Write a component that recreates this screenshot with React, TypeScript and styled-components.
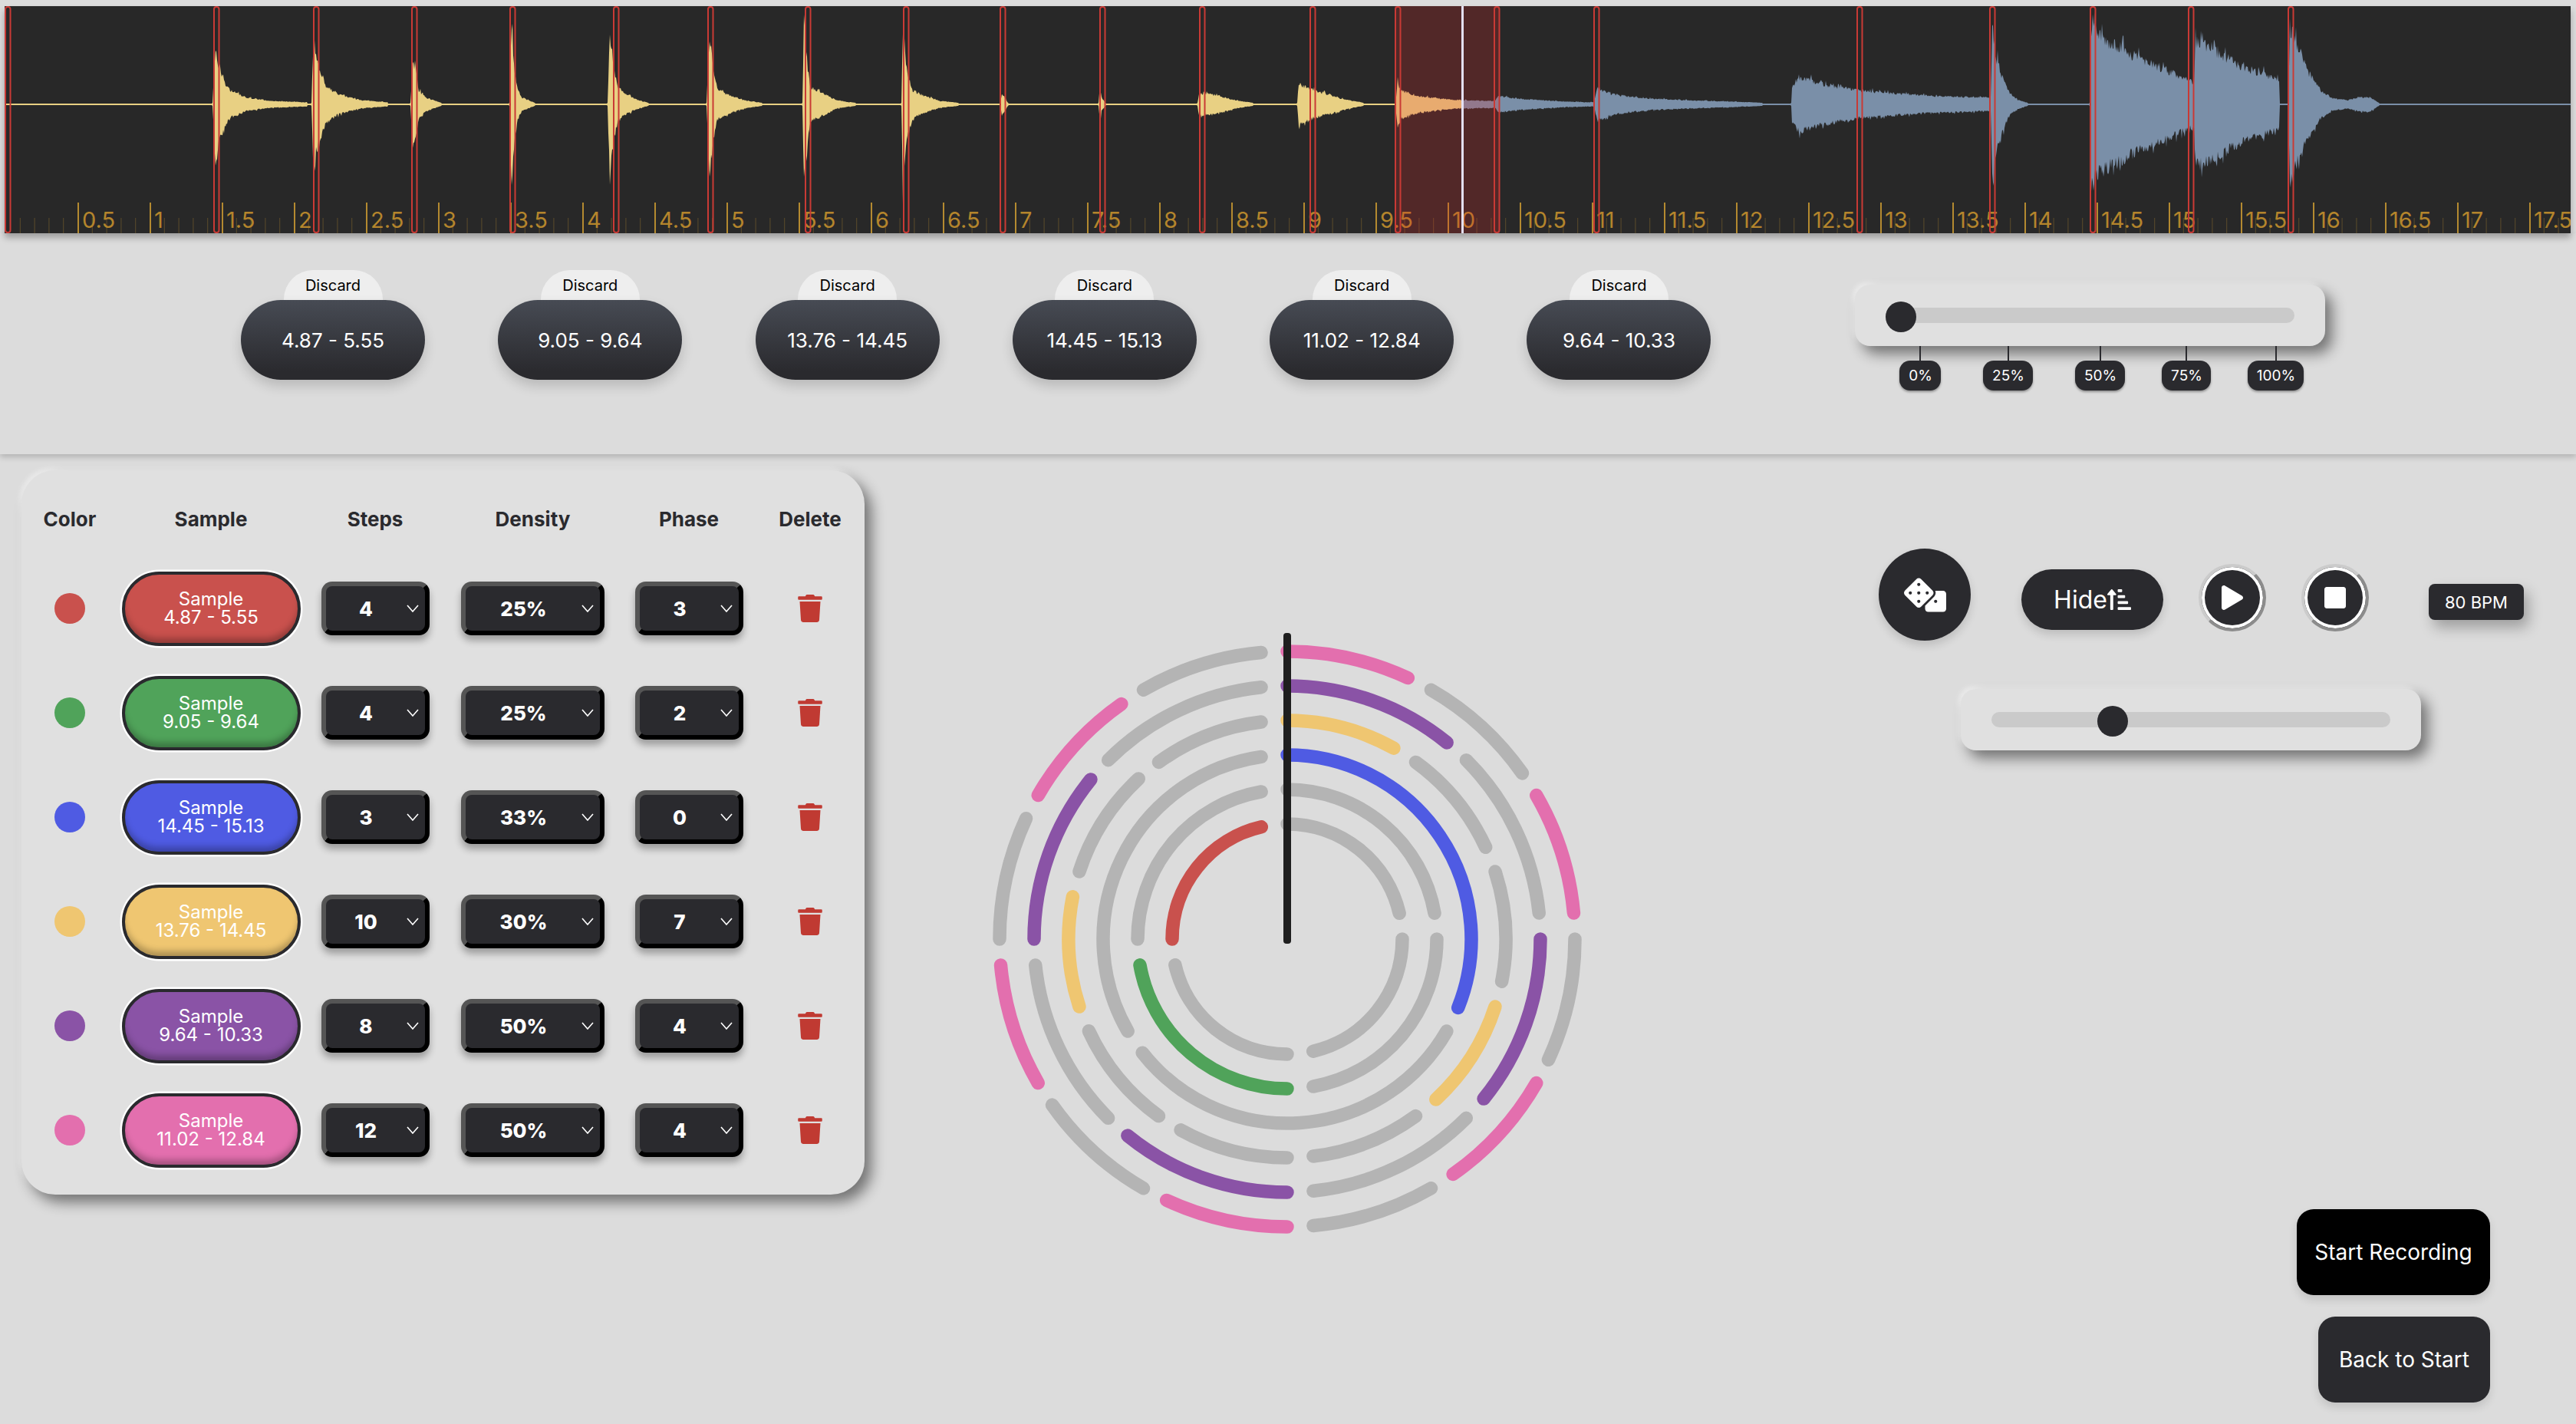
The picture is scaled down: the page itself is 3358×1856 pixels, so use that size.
import React from 'react';
import styled, { createGlobalStyle } from 'styled-components';
import { FaDice, FaPlay, FaSortAmountUpAlt, FaStop, FaTrash } from 'react-icons/fa';

const DARK = '#2a2a2e';
const RAISED = '9px 10px 18px rgba(0, 0, 0, 0.48), -3px -3px 6px rgba(255, 255, 255, 0.55)';

const GlobalStyle = createGlobalStyle`
  html, body {
    margin: 0;
    padding: 0;
    background: #dcdcdc;
  }
  body {
    font-family: Inter, "Liberation Sans", sans-serif;
    color: ${DARK};
  }
`;

const Page = styled.div`
  display: flex;
  flex-direction: column;
  width: 3358px;
  min-height: 100vh;
  padding-top: 8px;
  box-sizing: border-box;
  overflow: hidden;
`;

const WaveBox = styled.div`
  position: relative;
  z-index: 2;
  height: 296px;
  margin: 0 7px 0 6px;
  background: #282828;
  box-shadow: 0 6px 8px rgba(0, 0, 0, 0.28);

  svg {
    display: block;
  }
`;

const TopPanel = styled.section`
  position: relative;
  z-index: 1;
  display: flex;
  align-items: flex-start;
  height: 288px;
  padding-left: 314px;
  box-sizing: border-box;
  box-shadow: 0 4px 7px rgba(0, 0, 0, 0.18);
`;

const PillRow = styled.div`
  display: flex;
  gap: 95.3px;
  padding-top: 48px;
`;

const PillGroup = styled.div`
  display: flex;
  flex-direction: column;
  align-items: center;
`;

const DiscardTab = styled.button`
  width: 129px;
  height: 39px;
  padding: 0;
  border: 0;
  border-radius: 38px 38px 0 0;
  background: #eeeeee;
  color: #000;
  font: 400 20px Inter, sans-serif;
`;

const RangePill = styled.button`
  width: 240px;
  height: 104px;
  border: 0;
  border-radius: 52px;
  background: linear-gradient(180deg, #474b54 0%, #2a2a2e 90%);
  color: #fff;
  font: 400 26px Inter, sans-serif;
  box-shadow: 0 8px 16px rgba(0, 0, 0, 0.16);
`;

const SliderGroup = styled.div`
  width: 613px;
  margin: 67px 0 0 188px;
`;

const SliderCard = styled.div<{ $width: number }>`
  display: flex;
  align-items: center;
  width: ${({ $width }) => $width}px;
  height: 80px;
  padding: 0 40px;
  box-sizing: border-box;
  border-radius: 20px;
  background: #e0e0e0;
  box-shadow: ${RAISED};
`;

const Track = styled.div`
  position: relative;
  flex: 1;
  height: 20px;
  border-radius: 10px;
  background: #cacaca;
`;

const Thumb = styled.div<{ $at: number }>`
  position: absolute;
  top: -8px;
  left: ${({ $at }) => $at}px;
  width: 40px;
  height: 40px;
  border-radius: 50%;
  background: ${DARK};
`;

const Marks = styled.div`
  display: flex;
  padding-left: 58px;
`;

const Mark = styled.div<{ $gap: number }>`
  display: flex;
  flex-direction: column;
  align-items: center;
  margin-left: ${({ $gap }) => $gap}px;

  &::before {
    content: '';
    width: 2px;
    height: 19px;
    background: ${DARK};
  }
`;

const MarkLabel = styled.span<{ $width: number }>`
  display: flex;
  align-items: center;
  justify-content: center;
  width: ${({ $width }) => $width}px;
  height: 39px;
  border-radius: 14px;
  background: ${DARK};
  color: #fff;
  font-size: 19px;
  box-shadow: 0 2px 3px rgba(0, 0, 0, 0.35);
`;

const Main = styled.main`
  display: flex;
  flex: 1;
  align-items: flex-start;
  padding: 21px 0 0 28px;
`;

const TableCard = styled.section`
  display: grid;
  grid-template-columns: 126px 242px 186px 225px 182px 134px;
  grid-template-rows: 72px repeat(6, 136px);
  justify-items: center;
  align-items: center;
  width: 1099px;
  height: 944px;
  padding-top: 40px;
  box-sizing: border-box;
  border-radius: 44px;
  background: #e0e0e0;
  box-shadow: ${RAISED};
`;

const HeadCell = styled.div`
  align-self: start;
  font-size: 26px;
  font-weight: 700;
  line-height: 48px;
`;

const Dot = styled.span<{ $color: string }>`
  width: 40px;
  height: 40px;
  border-radius: 50%;
  background: ${({ $color }) => $color};
`;

const SampleButton = styled.button<{ $color: string }>`
  width: 233px;
  height: 97px;
  padding: 0;
  box-sizing: border-box;
  border: 4px solid ${DARK};
  border-radius: 49px;
  background: ${({ $color }) => $color};
  color: #fff;
  font: 400 24px/24px Inter, sans-serif;
  box-shadow: 0 0 0 2.5px #fff, inset 0 -9px 9px -3px rgba(0, 0, 0, 0.28);
`;

const SelectBox = styled.div<{ $wide?: boolean }>`
  display: flex;
  align-items: center;
  width: ${({ $wide }) => ($wide ? 187 : 141)}px;
  height: 70px;
  padding-right: 8px;
  box-sizing: border-box;
  border: 6px solid;
  border-color: #555555 #000 #000 #555555;
  border-radius: 14px;
  background: ${DARK};
  color: #fff;
  font-size: 26px;
  font-weight: 800;
  box-shadow: 0 7px 10px rgba(0, 0, 0, 0.3);
`;

const SelectValue = styled.span`
  flex: 1;
  text-align: center;
`;

const TrashIcon = styled(FaTrash)`
  color: #c03a32;
  font-size: 36px;
`;

const Sequencer = styled.svg`
  flex: none;
  margin: 191px 0 0 151px;
`;

const RightColumn = styled.div`
  display: flex;
  flex-direction: column;
  flex: none;
  align-self: stretch;
  width: 909px;
  margin-left: 371px;
  padding: 102px 112px 28px 0;
  box-sizing: border-box;
`;

const ControlRow = styled.div`
  display: flex;
  align-items: flex-start;
  height: 120px;
`;

const DiceButton = styled.button`
  display: flex;
  align-items: center;
  justify-content: center;
  flex: none;
  width: 120px;
  height: 120px;
  padding: 0;
  border: 0;
  border-radius: 50%;
  background: ${DARK};
  color: #fff;
  font-size: 55px;
  box-shadow: 0 6px 12px rgba(0, 0, 0, 0.14);
`;

const HideButton = styled.button`
  display: flex;
  align-items: center;
  justify-content: center;
  flex: none;
  width: 185px;
  height: 79px;
  margin: 27px 0 0 66px;
  padding: 0;
  border: 0;
  border-radius: 40px;
  background: ${DARK};
  color: #fff;
  font: 400 32px Inter, sans-serif;
  box-shadow: 0 6px 12px rgba(0, 0, 0, 0.14);

  svg {
    font-size: 31px;
  }
`;

const RoundButton = styled.button<{ $left: number }>`
  display: flex;
  align-items: center;
  justify-content: center;
  flex: none;
  width: 88px;
  height: 88px;
  margin: 20px 0 0 ${({ $left }) => $left}px;
  padding: 0;
  box-sizing: border-box;
  border: 4px solid;
  border-color: #cbcbcb #8c8c8c #8c8c8c #cbcbcb;
  border-radius: 50%;
  background: ${DARK};
  color: #fff;
  font-size: 32px;
  box-shadow: inset 0 0 0 4px #fff;
`;

const BpmTag = styled.div`
  display: flex;
  align-items: center;
  justify-content: center;
  flex: none;
  width: 124px;
  height: 47px;
  margin: 46px 0 0 78px;
  border-radius: 8px;
  background: ${DARK};
  color: #fff;
  font-size: 22px;
  box-shadow: 6px 10px 18px rgba(0, 0, 0, 0.28);
`;

const TempoSlider = styled.div`
  margin: 63px 0 0 107px;
`;

const ActionStack = styled.div`
  display: flex;
  flex-direction: column;
  align-items: flex-end;
  gap: 28px;
  margin-top: auto;
`;

const ActionButton = styled.button<{ $dark?: boolean }>`
  width: ${({ $dark }) => ($dark ? 224 : 252)}px;
  height: 112px;
  padding: 0;
  border: 0;
  border-radius: 22px;
  background: ${({ $dark }) => ($dark ? DARK : '#000')};
  color: #fff;
  font: 400 28px Inter, sans-serif;
  box-shadow: 0 6px 12px rgba(0, 0, 0, 0.12);
`;

const WAVE_X = 6;
const WAVE_W = 3345;
const WAVE_H = 296;
const MID = 128;

// envelope of each hit, as x,halfHeight pairs in page pixels
const ENVELOPES: number[][] = [
  [277, 2, 281, 90, 284, 60, 288, 48, 294, 30, 300, 20, 320, 10, 350, 5, 400, 3],
  [406, 2, 409, 109, 412, 70, 418, 50, 425, 27, 440, 15, 470, 6, 505, 3],
  [535, 2, 538, 60, 542, 50, 546, 20, 555, 10, 575, 2],
  [664, 2, 667, 121, 670, 60, 674, 25, 680, 10, 697, 2],
  [792, 2, 795, 109, 799, 60, 805, 25, 815, 15, 830, 7, 845, 2],
  [921, 2, 925, 105, 929, 60, 935, 22, 950, 13, 970, 6, 993, 2],
  [1046, 2, 1048, 118, 1052, 60, 1056, 25, 1070, 18, 1090, 6, 1115, 2],
  [1175, 2, 1177, 113, 1182, 50, 1190, 20, 1205, 12, 1225, 5, 1249, 2],
  [1304, 2, 1306, 15, 1310, 10, 1314, 2],
  [1432, 2, 1434, 25, 1436, 10, 1441, 2],
  [1561, 2, 1563, 15, 1570, 16, 1590, 12, 1610, 6, 1633, 2],
  [1691, 2, 1693, 30, 1710, 21, 1730, 15, 1750, 8, 1777, 2],
  [1819, 2, 1822, 32, 1826, 20, 1850, 12, 1880, 8, 1900, 6, 1948, 5],
  [1949, 5, 1953, 12, 1980, 8, 2040, 4, 2077, 3],
  [2078, 3, 2082, 24, 2100, 15, 2140, 9, 2200, 6, 2260, 4, 2297, 2],
  [2335, 2, 2336, 26, 2345, 40, 2380, 28, 2424, 20, 2460, 17, 2520, 12, 2594, 10],
  [2595, 10, 2597, 115, 2602, 70, 2610, 40, 2620, 15, 2630, 7, 2643, 2],
  [2724, 2, 2726, 112, 2735, 100, 2780, 72, 2859, 32],
  [2860, 32, 2862, 88, 2880, 84, 2920, 56, 2971, 36],
  [2983, 2, 2985, 113, 2995, 85, 3010, 45, 3025, 20, 3040, 9, 3060, 6, 3075, 10, 3090, 10, 3101, 2],
];

function envelopeAt(x: number): number {
  for (const env of ENVELOPES) {
    if (x < env[0] || x > env[env.length - 2]) continue;
    for (let i = 0; i < env.length - 2; i += 2) {
      if (x >= env[i] && x <= env[i + 2]) {
        const t = (x - env[i]) / (env[i + 2] - env[i]);
        return env[i + 1] + t * (env[i + 3] - env[i + 1]);
      }
    }
  }
  return 1;
}

function buildWavePath(): string {
  let seed = 1337;
  const rand = () => {
    seed = (seed * 16807) % 2147483647;
    return seed / 2147483647;
  };
  const top: string[] = [];
  const bottom: string[] = [];
  for (let x = 0; x <= WAVE_W; x += 1) {
    const hh = envelopeAt(x + WAVE_X);
    const jag = () => (hh > 3 ? hh * (0.78 + 0.22 * rand()) * (rand() > 0.86 ? 1.15 : 1) : hh);
    top.push(`${x} ${(MID - jag()).toFixed(1)}`);
    bottom.unshift(`${x} ${(MID + jag()).toFixed(1)}`);
  }
  return `M${top.join('L')}L${bottom.join('L')}Z`;
}

const WAVE_PATH = buildWavePath();
const CURSOR_X = 1906 - WAVE_X;
const REGION_CENTERS = [
  10, 282, 412, 540, 668, 803, 926, 1053, 1181, 1307, 1437, 1567, 1711, 1822, 1951, 2081, 2424, 2597, 2728, 2856, 2986,
];
const TICK_STEP = 94;

function Waveform() {
  const majors = Array.from({ length: 35 }, (_, i) => i + 1);
  const minors = Array.from({ length: 180 }, (_, i) => i + 1).filter((i) => i % 5 !== 0);
  return (
    <WaveBox>
      <svg width={WAVE_W} height={WAVE_H} viewBox={`0 0 ${WAVE_W} ${WAVE_H}`}>
        <defs>
          <clipPath id="played">
            <rect x="0" y="0" width={CURSOR_X} height={WAVE_H} />
          </clipPath>
          <clipPath id="unplayed">
            <rect x={CURSOR_X} y="0" width={WAVE_W - CURSOR_X} height={WAVE_H} />
          </clipPath>
        </defs>
        <path d={WAVE_PATH} fill="#7a8fa8" clipPath="url(#unplayed)" />
        <path d={WAVE_PATH} fill="#e8d083" clipPath="url(#played)" />
        {minors.map((i) => (
          <rect key={i} x={1 + (i * TICK_STEP) / 5} y={276} width="1" height="20" fill="#5c4d2c" />
        ))}
        {majors.map((i) => (
          <g key={i}>
            <rect x={1 + i * TICK_STEP} y={256} width="2" height="40" fill="#b48a30" />
            <text x={7 + i * TICK_STEP} y={289} fill="#b4852c" fontFamily="Inter, sans-serif" fontSize="29">
              {i / 2}
            </text>
          </g>
        ))}
        <rect x={1818 - WAVE_X} y="0" width="137" height={WAVE_H} fill="rgba(230, 40, 40, 0.22)" />
        <rect x={CURSOR_X - 1} y="0" width="3" height={WAVE_H} fill="#e4e0f4" />
        {REGION_CENTERS.map((c) => (
          <rect
            key={c}
            x={c - WAVE_X - 3}
            y="1"
            width="6.5"
            height={WAVE_H - 2}
            rx="3"
            fill="none"
            stroke="#c93a35"
            strokeWidth="2"
          />
        ))}
      </svg>
    </WaveBox>
  );
}

const SAMPLE_RANGES = ['4.87 - 5.55', '9.05 - 9.64', '13.76 - 14.45', '14.45 - 15.13', '11.02 - 12.84', '9.64 - 10.33'];

const MARKS = [
  { label: '0%', width: 54, gap: 0 },
  { label: '25%', width: 65, gap: 55 },
  { label: '50%', width: 65, gap: 55 },
  { label: '75%', width: 64, gap: 48 },
  { label: '100%', width: 73, gap: 48 },
];

interface Track {
  color: string;
  range: string;
  steps: number;
  density: string;
  phase: number;
  radius: number;
  active: number[];
}

const TRACKS: Track[] = [
  { color: '#c9514d', range: '4.87 - 5.55', steps: 4, density: '25%', phase: 3, radius: 150, active: [3] },
  { color: '#50a35a', range: '9.05 - 9.64', steps: 4, density: '25%', phase: 2, radius: 195, active: [2] },
  { color: '#4f5be3', range: '14.45 - 15.13', steps: 3, density: '33%', phase: 0, radius: 240, active: [0] },
  { color: '#efc671', range: '13.76 - 14.45', steps: 10, density: '30%', phase: 7, radius: 285, active: [0, 3, 7] },
  { color: '#8a53a6', range: '9.64 - 10.33', steps: 8, density: '50%', phase: 4, radius: 330, active: [0, 2, 4, 6] },
  { color: '#e36fae', range: '11.02 - 12.84', steps: 12, density: '50%', phase: 4, radius: 375, active: [0, 2, 4, 6, 8, 10] },
];

const HEADERS = ['Color', 'Sample', 'Steps', 'Density', 'Phase', 'Delete'];

function Chevron() {
  return (
    <svg width="16" height="10" viewBox="0 0 16 10" fill="none" stroke="#fff" strokeWidth="1.6">
      <polyline points="1,1 8,9 15,1" />
    </svg>
  );
}

const SEQ_CX = 400;
const SEQ_CY = 420;
const STEP_GAP = 34;

function arcPath(radius: number, from: number, to: number): string {
  const point = (a: number) => `${SEQ_CX + radius * Math.sin(a)} ${SEQ_CY - radius * Math.cos(a)}`;
  const large = to - from > Math.PI ? 1 : 0;
  return `M${point(from)}A${radius} ${radius} 0 ${large} 1 ${point(to)}`;
}

function RingSequencer() {
  return (
    <Sequencer width="800" height="840" viewBox="0 0 800 840">
      {TRACKS.map((track) =>
        Array.from({ length: track.steps }, (_, step) => {
          const size = (Math.PI * 2) / track.steps;
          const from = step * size;
          const to = from + size - STEP_GAP / track.radius;
          return (
            <path
              key={`${track.radius}-${step}`}
              d={arcPath(track.radius, from, to)}
              fill="none"
              stroke={track.active.includes(step) ? track.color : '#b4b4b4'}
              strokeWidth="17.5"
              strokeLinecap="round"
            />
          );
        }),
      )}
      <rect x="395" y="21" width="10" height="405" rx="4" fill="#1e1e1e" />
    </Sequencer>
  );
}

export default function App() {
  return (
    <Page>
      <GlobalStyle />
      <Waveform />
      <TopPanel>
        <PillRow>
          {SAMPLE_RANGES.map((range) => (
            <PillGroup key={range}>
              <DiscardTab>Discard</DiscardTab>
              <RangePill>{range}</RangePill>
            </PillGroup>
          ))}
        </PillRow>
        <SliderGroup>
          <SliderCard $width={613}>
            <Track>
              <Thumb $at={0} />
            </Track>
          </SliderCard>
          <Marks>
            {MARKS.map((mark) => (
              <Mark key={mark.label} $gap={mark.gap}>
                <MarkLabel $width={mark.width}>{mark.label}</MarkLabel>
              </Mark>
            ))}
          </Marks>
        </SliderGroup>
      </TopPanel>
      <Main>
        <TableCard>
          {HEADERS.map((h) => (
            <HeadCell key={h}>{h}</HeadCell>
          ))}
          {TRACKS.map((track) => (
            <React.Fragment key={track.color}>
              <Dot $color={track.color} />
              <SampleButton $color={track.color}>
                Sample
                <br />
                {track.range}
              </SampleButton>
              <SelectBox>
                <SelectValue>{track.steps}</SelectValue>
                <Chevron />
              </SelectBox>
              <SelectBox $wide>
                <SelectValue>{track.density}</SelectValue>
                <Chevron />
              </SelectBox>
              <SelectBox>
                <SelectValue>{track.phase}</SelectValue>
                <Chevron />
              </SelectBox>
              <TrashIcon />
            </React.Fragment>
          ))}
        </TableCard>
        <RingSequencer />
        <RightColumn>
          <ControlRow>
            <DiceButton>
              <FaDice />
            </DiceButton>
            <HideButton>
              Hide
              <FaSortAmountUpAlt />
            </HideButton>
            <RoundButton $left={46}>
              <FaPlay />
            </RoundButton>
            <RoundButton $left={46}>
              <FaStop />
            </RoundButton>
            <BpmTag>80 BPM</BpmTag>
          </ControlRow>
          <TempoSlider>
            <SliderCard $width={600}>
              <Track>
                <Thumb $at={138} />
              </Track>
            </SliderCard>
          </TempoSlider>
          <ActionStack>
            <ActionButton>Start Recording</ActionButton>
            <ActionButton $dark>Back to Start</ActionButton>
          </ActionStack>
        </RightColumn>
      </Main>
    </Page>
  );
}
